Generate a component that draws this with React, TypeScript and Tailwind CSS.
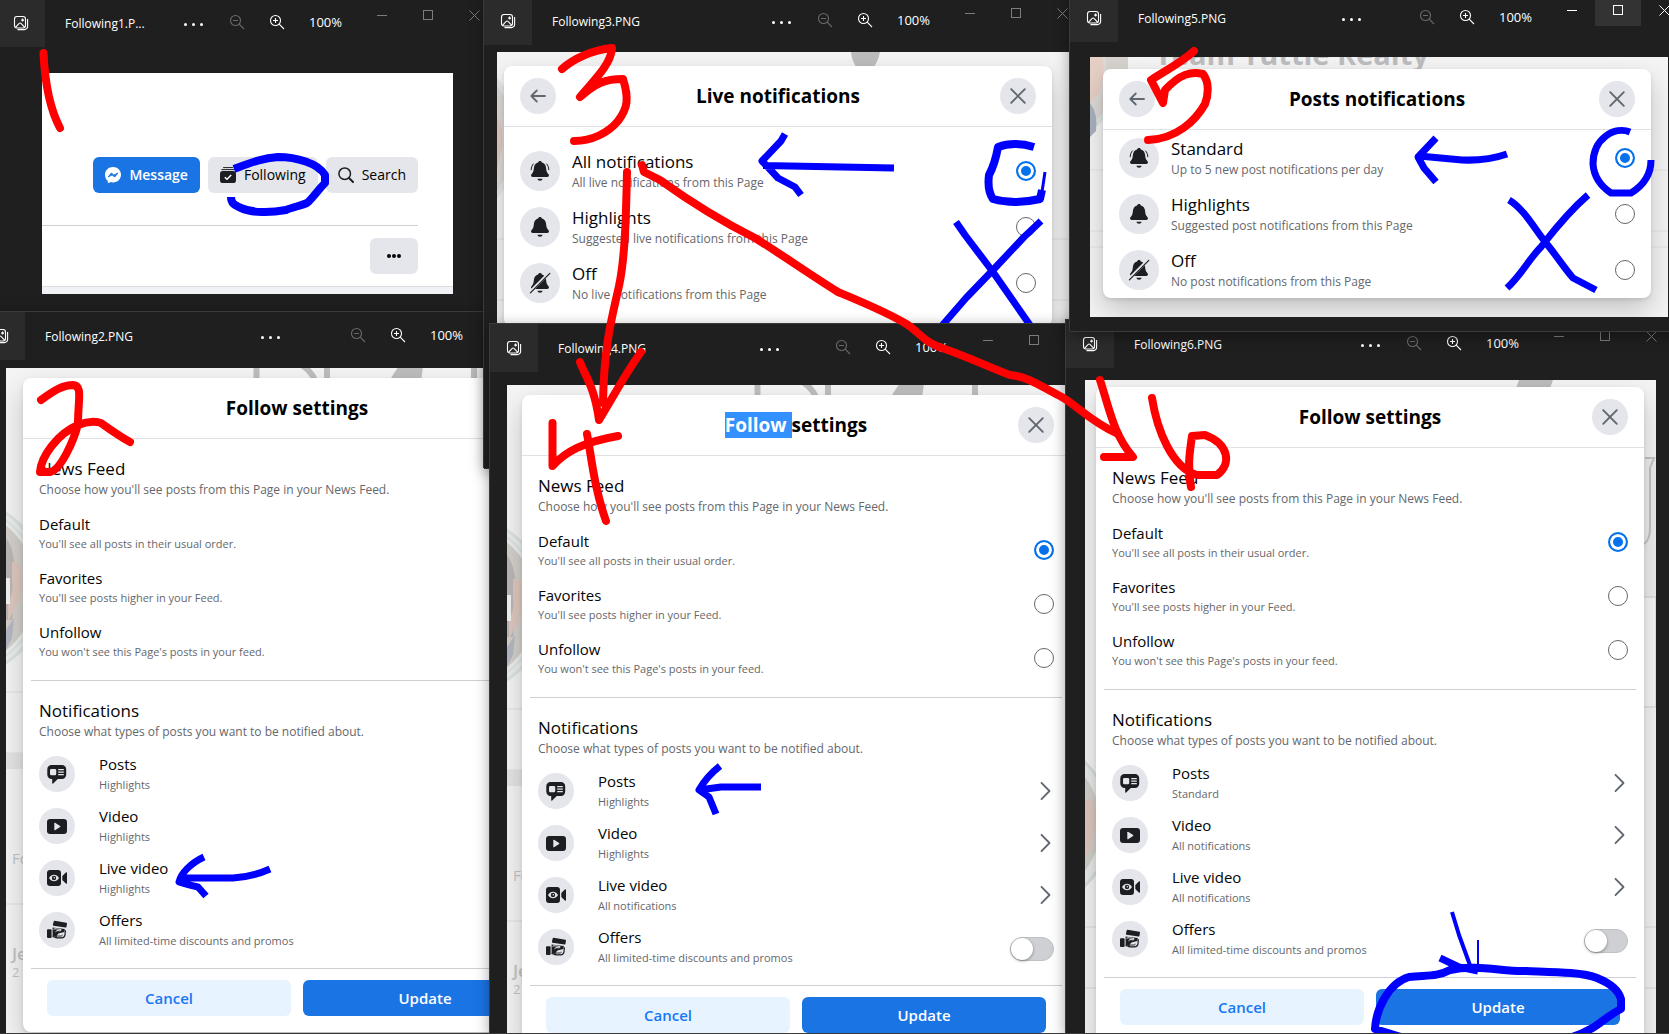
import React from "react";

type WindowProps = {
  title: string;
  place: string;
  titleWidth: string;
  padding: string;
  active?: boolean;
  children: React.ReactNode;
};

const inactiveInk = "text-[#7c7c7c]";

function PhotoIcon() {
  return (
    <svg width="16" height="16" viewBox="0 0 16 16" fill="none" stroke="#fff" strokeWidth="1.1" aria-hidden="true">
      <rect x="1.5" y="1.5" width="11" height="11.5" rx="2.5" />
      <path d="M14.6 4v7.4a3.2 3.2 0 0 1-3.2 3.2H4.5" />
      <path d="M2.5 12.4l3.7-4a1.2 1.2 0 0 1 1.8 0l3.8 4" />
      <path d="M9.6 3.6v3M8.1 5.1h3" />
    </svg>
  );
}

function ZoomIcon({ plus }: { plus?: boolean }) {
  return (
    <svg width="16" height="16" viewBox="0 0 16 16" fill="none" stroke="currentColor" strokeWidth="1.1" aria-hidden="true">
      <circle cx="6.5" cy="6.5" r="5" />
      <path d="M10.2 10.2l4.8 4.8M4 6.5h5" />
      {plus && <path d="M6.5 4v5" />}
    </svg>
  );
}

function AppWindow({ title, place, titleWidth, padding, active, children }: WindowProps) {
  const ink = active ? "text-white" : inactiveInk;
  return (
    <section
      aria-label={title}
      className={`absolute flex flex-col overflow-hidden border-t border-[#3a3a3a] bg-[#1f1f1f] shadow-[-1px_0_0_#3a3a3a,1px_0_0_#3a3a3a,0_1px_0_#3a3a3a,0_4px_14px_rgba(0,0,0,0.4)] ${place}`}
    >
      <header className="flex h-12 shrink-0 items-start text-white">
        <button aria-label="See all photos" className="flex h-full w-12 shrink-0 items-center justify-center bg-[#2b2b2b]">
          <PhotoIcon />
        </button>
        <div className={`flex h-full shrink-0 items-center pl-5 pt-0.5 ${titleWidth}`}>
          <h2 className="whitespace-nowrap text-[12px] leading-4">{title}</h2>
        </div>
        <button aria-label="More" className="flex h-full shrink-0 items-center gap-[5px] pt-0.5">
          <i className="size-[3px] rounded-full bg-white" />
          <i className="size-[3px] rounded-full bg-white" />
          <i className="size-[3px] rounded-full bg-white" />
        </button>
        <div className="ml-auto flex h-full items-center pb-0.5">
          <button aria-label="Zoom out" className="flex w-10 justify-center text-[#6a6a6a]">
            <ZoomIcon />
          </button>
          <button aria-label="Zoom in" className="flex w-10 justify-center text-white">
            <ZoomIcon plus />
          </button>
          <span className="w-[62px] pl-3 text-[13px] leading-5">100%</span>
        </div>
        <div className={`flex h-8 ${ink}`}>
          <button aria-label="Minimize" className="flex w-[46px] items-center justify-center">
            <i className="h-px w-2.5 bg-current" />
          </button>
          <button
            aria-label="Maximize"
            className={`flex w-[46px] items-center justify-center ${active ? "bg-[#333333]" : ""}`}
          >
            <i className="size-2.5 border border-current" />
          </button>
          <button aria-label="Close" className="flex w-[46px] items-center justify-center">
            <svg width="11" height="11" viewBox="0 0 11 11" stroke="currentColor" aria-hidden="true">
              <path d="M.5.5l10 10M10.5.5l-10 10" />
            </svg>
          </button>
        </div>
      </header>
      <div className={`flex min-h-0 flex-1 ${padding}`}>{children}</div>
    </section>
  );
}

/* ---------- dialog pieces ---------- */

const backdropSurface = "relative w-full overflow-hidden bg-[#f4f4f4]";
const dialogCard =
  "relative w-[548px] rounded-lg bg-white shadow-[0_12px_28px_rgba(0,0,0,0.2),0_2px_4px_rgba(0,0,0,0.1)]";

function RoundButton({ label, children }: { label: string; children: React.ReactNode }) {
  return (
    <button aria-label={label} className="flex size-9 items-center justify-center rounded-full bg-[#e4e6eb] text-[#606770]">
      {children}
    </button>
  );
}

function DialogHeader({ back, children }: { back?: boolean; children: React.ReactNode }) {
  return (
    <div className="grid h-[61px] grid-cols-[36px_1fr_36px] items-center border-b border-[#dfe1e4] px-4">
      <span>
        {back && (
          <RoundButton label="Back">
            <svg width="18" height="18" viewBox="0 0 18 18" fill="none" stroke="currentColor" strokeWidth="1.8" strokeLinecap="round" strokeLinejoin="round" aria-hidden="true">
              <path d="M16 9H2.500M7.800 3.500L2.300 9l5.500 5.500" />
            </svg>
          </RoundButton>
        )}
      </span>
      <h3 className="text-center text-[19px] font-bold leading-[25px] text-black">{children}</h3>
      <RoundButton label="Close dialog">
        <svg width="18" height="18" viewBox="0 0 18 18" stroke="currentColor" strokeWidth="1.9" strokeLinecap="round" aria-hidden="true">
          <path d="M2.200 2.200l13.600 13.600M15.800 2.200L2.200 15.800" />
        </svg>
      </RoundButton>
    </div>
  );
}

function Radio({ name, label, checked }: { name: string; label: string; checked?: boolean }) {
  return (
    <input
      type="radio"
      name={name}
      aria-label={label}
      defaultChecked={checked}
      className="size-5 shrink-0 appearance-none rounded-full border border-[#65676b] bg-white checked:border-2 checked:border-[#0571ed] checked:bg-[#0571ed] checked:shadow-[inset_0_0_0_3px_white]"
    />
  );
}

function BellIcon({ kind }: { kind: "ring" | "plain" | "off" }) {
  return (
    <svg width="24" height="24" viewBox="0 0 24 24" fill="#1c1e21" aria-hidden="true">
      <path d="M12 2c1 0 1.800.7 1.900 1.400C16.600 4.200 17.900 6.300 18.100 9c.2 3 .9 4.600 2.400 6.300.9 1.100.5 2.600-1 2.600H4.500c-1.500 0-1.900-1.500-1-2.600C5 13.600 5.700 12 5.900 9 6.100 6.300 7.400 4.200 10.100 3.400 10.200 2.700 11 2 12 2z" />
      <path d="M9.400 19.700h5.200c-.3 1.300-1.200 2-2.600 2s-2.300-.7-2.600-2z" />
      {kind === "ring" && (
        <path d="M5.400 4.900C4.100 6.200 3.300 8.200 3.200 10.700M18.600 4.900c1.300 1.300 2.100 3.300 2.200 5.800" fill="none" stroke="#1c1e21" strokeWidth="1" strokeLinecap="round" />
      )}
      {kind === "off" && (
        <>
          <path d="M1.800 21.200L21.200 1.800" stroke="#e4e6eb" strokeWidth="3" />
          <path d="M2.400 21.800L21.800 2.400" stroke="#1c1e21" strokeWidth="1.200" strokeLinecap="round" />
        </>
      )}
    </svg>
  );
}

type Choice = { title: string; note: string; kind: "ring" | "plain" | "off" };

function NotificationDialog({ group, title, choices, listPad }: { group: string; title: string; choices: Choice[]; listPad: string }) {
  return (
    <div className={dialogCard}>
      <DialogHeader back>{title}</DialogHeader>
      <div className={listPad}>
        {choices.map((c, i) => (
          <label key={c.title} className="flex h-14 items-center gap-3 px-4">
            <span className="flex size-10 items-center justify-center rounded-full bg-[#e4e6eb]">
              <BellIcon kind={c.kind} />
            </span>
            <span className="flex-1 pt-[3px]">
              <span className="block text-[17px] leading-5 text-[#050505]">{c.title}</span>
              <span className="mt-px block text-[12px] leading-5 text-[#65676b]">{c.note}</span>
            </span>
            <Radio name={group} label={c.title} checked={i === 0} />
          </label>
        ))}
      </div>
    </div>
  );
}

function FeatureIcon({ kind }: { kind: string }) {
  return (
    <span className="flex size-9 items-center justify-center rounded-full bg-[#e4e6eb]">
      <svg width="20" height="20" viewBox="0 0 20 20" fill="#1c1e21" aria-hidden="true">
        {kind === "Posts" && (
          <>
            <path d="M4.500 1h10.500a4.200 4.200 0 0 1 4.200 4.200v5.600A4.200 4.200 0 0 1 15 15h-4.200l-4.600 4.600a.6.600 0 0 1-1-.4V15h-.7A4.200 4.200 0 0 1 .3 10.800V5.200A4.200 4.200 0 0 1 4.500 1z" />
            <rect x="3" y="5" width="6.200" height="6.200" rx="1.300" fill="#e4e6eb" />
            <path d="M11.200 5.600h5.600M11.200 8.100h5.600M11.200 10.600h5.600" stroke="#e4e6eb" strokeWidth="1.100" />
          </>
        )}
        {kind === "Video" && (
          <>
            <rect x="0" y="3" width="20" height="15" rx="3.200" />
            <path d="M7.300 7.300c0-.5.400-.7.800-.5l5 3.200c.4.300.4.700 0 1l-5 3.200c-.4.200-.8 0-.8-.5z" fill="#e4e6eb" />
          </>
        )}
        {kind === "Live video" && (
          <>
            <rect x="0" y="2" width="14" height="16" rx="3" />
            <path d="M15.300 8l3.500-3.600c.5-.4 1.200-.1 1.200.5v10.200c0 .6-.7.900-1.200.5L15.300 12z" />
            <path d="M2 10c1.500-2.300 3-3.300 5-3.300S10.500 7.700 12 10c-1.500 2.300-3 3.300-5 3.300S3.500 12.300 2 10z" fill="#e4e6eb" />
            <circle cx="7" cy="10" r="2.200" />
            <circle cx="7.300" cy="9.700" r=".8" fill="#e4e6eb" />
          </>
        )}
        {kind === "Offers" && (
          <>
            <path d="M6.700 1.400c.1-.4.500-.7.900-.6l11.800 2c.4.100.7.500.6.900l-.6 3.300c-.1.400-.5.700-.9.600L6.500 5.700c-.400-.1-.7-.5-.6-.9z" />
            <rect x="0" y="9.300" width="4.600" height="8.700" rx="1" />
            <path d="M5.600 7.400l12.200 1.700-.4 3-5 1.100-2.200 1.100 1.200 1 4.600-.5-1.800 2.400H9.500L5.600 15.700z" />
            <path d="M5.400 16.300c1.700.1 2.500 1.400 4.700 1.500h4.600c1.900-.1 3-1.200 3.300-3l.4-4.500" fill="none" stroke="#1c1e21" strokeWidth="1.200" />
            <path d="M6.500 9.300c1-.6 2-.7 3-.4l4.500.6-.4 1.300-3.600-.2-1.500 1.200" fill="none" stroke="#e4e6eb" strokeWidth="1" />
            <path d="M9.800 16h5.700" stroke="#e4e6eb" strokeWidth="1" />
          </>
        )}
      </svg>
    </span>
  );
}

const feedChoices = [
  { title: "Default", note: "You'll see all posts in their usual order." },
  { title: "Favorites", note: "You'll see posts higher in your Feed." },
  { title: "Unfollow", note: "You won't see this Page's posts in your feed." },
];

function SettingsDialog({ group, heading, states }: { group: string; heading?: React.ReactNode; states: [string, string, string] }) {
  const rows = [
    { title: "Posts", note: states[0] },
    { title: "Video", note: states[1] },
    { title: "Live video", note: states[2] },
    { title: "Offers", note: "All limited-time discounts and promos" },
  ];
  return (
    <div className={`${dialogCard} shrink-0`}>
      <DialogHeader>{heading ?? "Follow settings"}</DialogHeader>
      <div className="px-4 pt-5">
        <h4 className="text-[17px] leading-5 text-[#050505]">News Feed</h4>
        <p className="mt-px text-[12px] leading-5 text-[#65676b]">Choose how you'll see posts from this Page in your News Feed.</p>
      </div>
      <div className="px-4 pb-2.5 pt-1.5">
        {feedChoices.map((c, i) => (
          <label key={c.title} className="flex h-[54px] items-center justify-between">
            <span className="pt-px">
              <span className="block text-[15px] leading-5 text-[#050505]">{c.title}</span>
              <span className="block text-[11px] leading-5 text-[#65676b]">{c.note}</span>
            </span>
            <Radio name={group} label={c.title} checked={i === 0} />
          </label>
        ))}
      </div>
      <hr className="mx-2 mt-0.5 border-[#ced0d4]" />
      <div className="px-4 pb-1.5 pt-5">
        <h4 className="text-[17px] leading-5 text-[#050505]">Notifications</h4>
        <p className="mt-px text-[12px] leading-5 text-[#65676b]">Choose what types of posts you want to be notified about.</p>
      </div>
      <ul className="px-4">
        {rows.map((r) => (
          <li key={r.title} className="flex h-[52px] items-center gap-6">
            <FeatureIcon kind={r.title} />
            <div className="flex-1 pt-px">
              <div className="text-[15px] leading-5 text-[#050505]">{r.title}</div>
              <div className="mt-px text-[11px] leading-5 text-[#65676b]">{r.note}</div>
            </div>
            {r.title === "Offers" ? (
              <input
                type="checkbox"
                role="switch"
                aria-label="Offers"
                className="mt-1 flex h-6 w-11 appearance-none items-center rounded-full border border-[#bfc1c5] bg-[#ced0d4] before:size-[22px] before:rounded-full before:bg-white before:shadow-[0_1px_3px_rgba(0,0,0,0.4)]"
              />
            ) : (
              <button aria-label={`Open ${r.title}`}>
                <svg width="20" height="20" viewBox="0 0 20 20" fill="none" stroke="#606770" strokeWidth="1.800" strokeLinecap="round" strokeLinejoin="round" aria-hidden="true">
                  <path d="M7.500 1.800l8 8.200-8 8.200" />
                </svg>
              </button>
            )}
          </li>
        ))}
      </ul>
      <hr className="mx-2 mt-3 border-[#ced0d4]" />
      <div className="grid grid-cols-2 gap-3 px-6 pb-4 pt-[11px] text-[15px] leading-5">
        <button className="h-9 rounded-md bg-[#e7f3ff] font-semibold text-[#1877f2]">Cancel</button>
        <button className="h-9 rounded-md bg-[#1b74e4] font-semibold text-white">Update</button>
      </div>
    </div>
  );
}

/* ---------- dimmed page seen behind the dialogs ---------- */

function PageBehind({ portraitTop }: { portraitTop: number }) {
  return (
    <div aria-hidden="true" className="absolute inset-0 text-[#c4c4c4]">
      <svg className="absolute left-0 top-0" width="582" height="670" viewBox="0 0 582 670" fill="none">
        <g stroke="#bdbdbd" strokeWidth="6">
          <path d="M250.500 0v12M321 0v12M468 0v12M290 -6q14 6 20 20" />
          <path d="M383 14q4-8 10-16h24l-2 16z" fill="#bdbdbd" stroke="none" />
        </g>
        <g transform={`translate(0 ${portraitTop})`}>
          <circle cx="-50" cy="76" r="90" fill="#eceeee" stroke="#dde3e3" strokeWidth="3" />
          <circle cx="-50" cy="76" r="80" fill="#d3d0cb" />
          <circle cx="-50" cy="76" r="84" stroke="#dde3e3" strokeWidth="2" />
          <path d="M0 26q6 8 7 18l3 14-4 50H0z" fill="#bab7b6" />
          <path d="M6 50q8-2 9 8l1 16q-2 14-6 20l-8 16V92q6-12 4-24z" fill="#ddc8be" />
          <path d="M0 66h4v26H0z" fill="#f2f2f2" />
          <path d="M0 118l8-12-2 20-6 12z" fill="#b4b8c2" />
        </g>
        <path d="M0 324h20M0 385h20M0 536h20" stroke="#dedede" />
        <path d="M0 385h20v16H0z" fill="#e4e4e4" />
      </svg>
      <div className="absolute left-1.5 top-[480px] text-[15px] leading-5">Fo</div>
      <div className="absolute left-1.5 top-[576px] text-[17px] font-semibold leading-5">Je</div>
      <div className="absolute left-1.5 top-[594px] text-[13px] leading-5">2</div>
    </div>
  );
}

function EdgeColumns() {
  return (
    <svg aria-hidden="true" className="absolute inset-0 size-full" fill="none">
      <path d="M434 0h34l-5 14h-34z" fill="#bdbdbd" />
      <circle cx="-60" cy="444" r="86" fill="#e8eaea" stroke="#d8dcdc" strokeWidth="3" />
      <circle cx="-60" cy="444" r="76" fill="#d3d0cb" />
      <path d="M0 420q10-4 11 10v14q-3 20-11 36z" fill="#ddc8be" />
      <path d="M558 77h13v140h-13z" fill="#eeeeee" />
      <path d="M560 78h9l-4 10v60q0 12-6 16" stroke="#c4c4c4" strokeWidth="2" />
      <path d="M558 217h13v110h-13z" fill="#f6f6f6" stroke="#cfcfcf" />
      <path d="M0 547h20M560 547h12M0 608h20M560 608h12" stroke="#dadada" />
    </svg>
  );
}

function RealtyBehind() {
  return (
    <div aria-hidden="true" className="absolute inset-0">
      <svg className="absolute left-0 top-0" width="578" height="260" fill="none">
        <circle cx="-40" cy="14" r="70" fill="#dcd9d6" stroke="#e0e6e4" strokeWidth="5" />
        <path d="M0 0h12q4 20-3 36l-9 10z" fill="#e6cfc4" />
        <path d="M16 0h22v12H16z" fill="#d6d3ce" />
        <path d="M0 46q8 10 6 28l-6 6z" fill="#a9b0be" />
        <path d="M0 113h578M0 174h578M0 190h578" stroke="#e4e4e4" />
      </svg>
      <p className="absolute -top-5 left-[65px] whitespace-nowrap text-[29px] font-bold leading-[34px] text-[#bdbdc0]">
        Team Tuttle Realty
      </p>
    </div>
  );
}

function PortraitEdge() {
  return (
    <svg aria-hidden="true" className="absolute inset-0 size-full" fill="none">
      <path d="M354 0h29q-2 10-7 16h-16q-5-6-6-16z" fill="#bdbdbd" />
      <circle cx="-70" cy="86" r="90" fill="#dedbd8" stroke="#e4e8e6" strokeWidth="5" />
      <path d="M0 66q7 8 5 30l-5 20z" fill="#e2cbc1" />
      <path d="M0 187h580M0 248h580" stroke="#e0e0e0" />
    </svg>
  );
}

/* ---------- hand-drawn marks ---------- */

function Ink() {
  return (
    <svg aria-hidden="true" className="pointer-events-none absolute left-0 top-0 h-[1034px] w-[1669px]" viewBox="0 0 1669 1034" fill="none">
      <clipPath id="above-fourth">
        <rect x="484" y="0" width="586" height="323" />
      </clipPath>
      <g stroke="#0000ff" strokeWidth="7" strokeLinejoin="round">
        <path strokeWidth="8" d="M234 169C250 163 262 158 278 157C296 157 318 163 325 175V183C318 190 312 199 307 203C300 206 293 207 286 210C270 213 252 213 241 208C234 205 231 203 231 197" />
        <path d="M785 134L781 141L762 161L778 178L795 187L801 195M763 165.500L894 168" />
        <path strokeWidth="8" d="M1034 147Q1014 141 998 147Q995 164 989 175Q987 190 993 199Q1014 205 1040 199L1042 190" />
        <path strokeWidth="3" d="M1042 192L1045 172" />
        <path clipPath="url(#above-fourth)" d="M956 222L965 235L993 272L1032 328M1041 221L1024 237L993 270L966 298L940 328" />
        <path d="M1436 138L1418 157L1424 168L1436 182M1419 156L1462 160Q1487 161 1507 154" />
        <path d="M1630 132C1615 126 1593 138 1593 164C1594 178 1602 187 1611 193H1631C1644 185 1651 174 1651 160" />
        <path d="M1509 200C1524 209 1534 228 1546 243C1556 255 1565 269 1573 278L1596 290M1588 195C1566 214 1552 233 1541 247C1529 259 1522 274 1507 288" />
        <path d="M204 857C191 863 181 873 179 882Q188 885 198 887L206 896M180 878H233Q252 877 270 869" />
        <path d="M720 766C711 773 704 781 699 790L709 797L716 814M699 790L721 787H761" />
        <path strokeWidth="4" d="M1452 912L1459 935L1471 968" />
        <path strokeWidth="2" d="M1478 940V970" />
        <path d="M1440 958L1459 967L1478 971" />
        <path strokeWidth="8" d="M1404 1038L1375 1029C1376 1010 1388 983 1409 977C1426 975 1437 977 1450 970C1476 964 1504 972 1526 971C1550 972 1582 972 1597 978C1612 984 1619 992 1621 999V1009C1604 1017 1598 1029 1572 1037" />
      </g>
      <g stroke="#ff0000" strokeWidth="8" strokeLinecap="round" strokeLinejoin="round">
        <path d="M43.500 53C45 85 50 109 60 128" />
        <path d="M41 400C56 389 64 385 73 385C83 386 78 399 78 424C74 440 61 470 50 472H40C41 457 57 434 78 425C90 420 99 422 101 423C112 431 121 437 130 442" />
        <path d="M562 69C573 59 592 50 612 48C611 66 590 84 580 97C596 83 605 79 623 79C629 98 628 108 618 121C608 133 592 141 574 141" />
        <path d="M627 172C626 218 625 258 619 286C612 318 604 344 603 403M580 362C585 376 594 385 599 420C611 401 625 374 641 352" />
        <path d="M642 165L644 172L660 180C692 203 725 223 755 238C778 252 806 272 838 292C862 302 889 313 908 325C922 335 924 342 942 348C968 357 989 367 1010 375C1030 377 1043 388 1060 396C1077 405 1088 420 1118 434" />
        <path d="M1100 380C1109 407 1113 434 1133 457H1104" />
        <path d="M552.500 423V466C566 451 584 442 618 436M587 434C592 460 594 487 606 521" />
        <path d="M1194 51C1182 62 1165 71 1151 80L1163 103L1165 90C1180 74 1191 71 1203 74C1210 83 1208 96 1205 104C1196 120 1177 139 1148 140" />
        <path d="M1152 398C1157 430 1172 468 1197 475H1217C1232 464 1229 444 1205 435L1192 436C1190 450 1187 467 1191 487" />
      </g>
    </svg>
  );
}

export default function App() {
  return (
    <main className="relative h-screen min-h-[640px] w-full overflow-hidden bg-[#1f1f1f] font-['Open_Sans','Noto_Sans',sans-serif] text-black">
      <AppWindow title="Following1.P..." place="-left-[3px] -top-[2px] h-[314px] w-[500px]" titleWidth="w-[139px]" padding="pl-[45px] pr-11 pb-[18px] pt-[26px]">
        <div className="flex w-full flex-col bg-white">
          <div className="mr-[35px] flex flex-1 items-end justify-end gap-2 border-b border-[#ced0d4] pb-8 text-[14px] leading-5">
            <button className="flex h-9 items-center gap-2 rounded-md bg-[#1b74e4] px-3 font-semibold text-white">
              <svg width="16" height="16" viewBox="0 0 16 16" fill="#fff" aria-hidden="true">
                <path d="M8 0c4.500 0 8 3.300 8 7.700s-3.500 7.700-8 7.700c-.8 0-1.600-.1-2.300-.3l-2 .8c-.500.2-.9-.1-.9-.600l-.1-1.500C1 12.400 0 10.300 0 7.700 0 3.300 3.500 0 8 0z" />
                <path d="M3.200 10l3-4 2.700 2 4-2.100-3.100 4.100-2.700-2z" fill="#1b74e4" stroke="#1b74e4" strokeWidth=".8" />
              </svg>
              Message
            </button>
            <button className="flex h-9 items-center gap-2 rounded-md bg-[#e4e6eb] px-3">
              <svg width="16" height="16" viewBox="0 0 16 16" aria-hidden="true">
                <path d="M3.500.6h9M1.800 2.600h12.400" stroke="#1c1e21" strokeLinecap="round" />
                <rect y="4" width="16" height="12" rx="2.800" fill="#1c1e21" />
                <path d="M4.800 10.200l2.200 2 4.200-4.200" stroke="#fff" strokeWidth="1.500" fill="none" />
              </svg>
              Following
            </button>
            <button className="flex h-9 items-center gap-2 rounded-md bg-[#e4e6eb] px-3">
              <svg width="16" height="16" viewBox="0 0 16 16" fill="none" stroke="#1c1e21" strokeWidth="1.500" strokeLinecap="round" aria-hidden="true">
                <circle cx="6.700" cy="6.700" r="5.800" />
                <path d="M11 11l4 4" strokeWidth="2" />
              </svg>
              Search
            </button>
          </div>
          <div className="flex h-[60px] items-center justify-end pr-[35px]">
            <button aria-label="More options" className="flex h-9 w-12 items-center justify-center gap-px rounded-md bg-[#e4e6eb]">
              <i className="size-1 rounded-full bg-[#050505]" />
              <i className="size-1 rounded-full bg-[#050505]" />
              <i className="size-1 rounded-full bg-[#050505]" />
            </button>
          </div>
          <div className="h-2 border-t border-[#dadce0] bg-[#f0f2f5]" />
        </div>
      </AppWindow>

      <AppWindow title="Following2.PNG" place="-left-[23px] top-[311px] bottom-0 w-[641px]" titleWidth="w-[236px]" padding="px-[29px] pt-2">
        <div className={`${backdropSurface} pl-[17px] pt-2.5`}>
          <PageBehind portraitTop={144} />
          <SettingsDialog group="feed-2" states={["Highlights", "Highlights", "Highlights"]} />
        </div>
      </AppWindow>

      <AppWindow title="Following3.PNG" place="left-[484px] -top-[4px] h-[472px] w-[601px]" titleWidth="w-[240px]" padding="px-[13px] pb-4 pt-[7px]">
        <div className={`${backdropSurface} pl-[7px] pt-[14px]`}>
          <PortraitEdge />
          <NotificationDialog
            group="live"
            title="Live notifications"
            listPad="pt-4 pb-4"
            choices={[
              { title: "All notifications", note: "All live notifications from this Page", kind: "ring" },
              { title: "Highlights", note: "Suggested live notifications from this Page", kind: "plain" },
              { title: "Off", note: "No live notifications from this Page", kind: "off" },
            ]}
          />
        </div>
      </AppWindow>

      <AppWindow title="Following4.PNG" place="left-[490px] top-[323px] bottom-0 w-[613px]" titleWidth="w-[222px]" padding="px-[17px] pt-[13px]">
        <div className={`${backdropSurface} pl-[15px] pt-2.5`}>
          <PageBehind portraitTop={144} />
          <SettingsDialog
            group="feed-4"
            heading={
              <>
                <mark className="bg-[#3390ff] text-white">Follow </mark>settings
              </>
            }
            states={["Highlights", "Highlights", "All notifications"]}
          />
        </div>
      </AppWindow>

      <AppWindow title="Following6.PNG" place="left-[1066px] top-[319px] bottom-0 w-[608px]" titleWidth="w-[247px]" padding="pl-[19px] pr-[18px] pt-3">
        <div className={`${backdropSurface} pl-[11px] pt-[7px]`}>
          <EdgeColumns />
          <SettingsDialog group="feed-6" states={["Standard", "All notifications", "All notifications"]} />
        </div>
      </AppWindow>

      <AppWindow active title="Following5.PNG" place="left-[1070px] -top-[7px] h-[338px] w-[617px]" titleWidth="w-[224px]" padding="pl-5 pr-[19px] pb-[14px] pt-[15px]">
        <div className={`${backdropSurface} pl-[13px] pt-3`}>
          <RealtyBehind />
          <NotificationDialog
            group="posts"
            title="Posts notifications"
            listPad=""
            choices={[
              { title: "Standard", note: "Up to 5 new post notifications per day", kind: "ring" },
              { title: "Highlights", note: "Suggested post notifications from this Page", kind: "plain" },
              { title: "Off", note: "No post notifications from this Page", kind: "off" },
            ]}
          />
        </div>
      </AppWindow>

      <Ink />
      <div className="absolute inset-x-0 bottom-0 h-px bg-[#3a3a3a]" />
    </main>
  );
}
